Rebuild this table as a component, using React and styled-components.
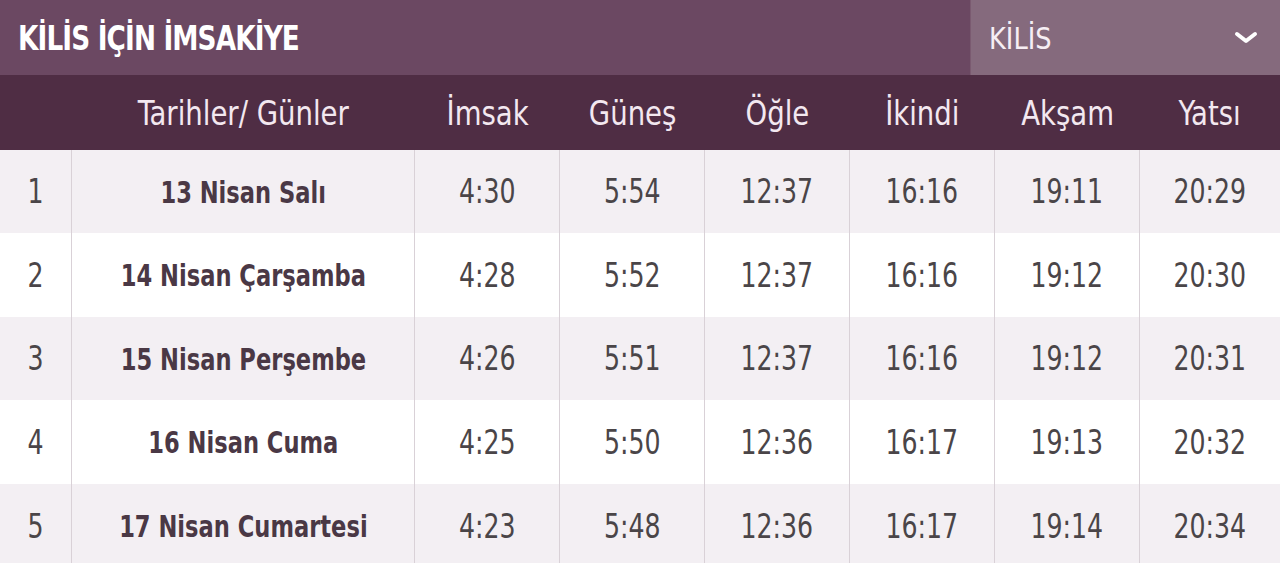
import styled, { createGlobalStyle } from "styled-components";

const GlobalStyle = createGlobalStyle`
  body {
    margin: 0;
    background: #fff;
    font-family: "DejaVu Sans Condensed", "DejaVu Sans", sans-serif;
  }
`;

const Container = styled.div`
  width: 1280px;
  overflow: hidden;
`;

const TopBar = styled.div`
  height: 75px;
  display: flex;
  background: #6b4862;
`;

// the original font is a narrow face; squeeze a wider one to fit
const Narrow = styled.span`
  display: inline-block;
  white-space: nowrap;
  transform: scaleX(${(p) => p.sx || 0.9});
  transform-origin: ${(p) => (p.left ? "left center" : "center")};
`;

const Title = styled.h1`
  flex: 1;
  margin: 0;
  padding-left: 18px;
  display: flex;
  align-items: center;
  color: #fff;
  font-size: 34px;
  font-weight: bold;
  letter-spacing: -1px;
`;

const Select = styled.div`
  width: 310px;
  display: flex;
  align-items: center;
  justify-content: space-between;
  padding: 0 22px 0 18px;
  box-sizing: border-box;
  background: #856a7d;
  border-left: 1px solid #7a5a70;
  color: #f6eef4;
  font-size: 31px;
`;

const Grid = styled.div`
  display: grid;
  grid-template-columns: 72px 343px repeat(5, 145px) 140px;
`;

const HeadCell = styled.div`
  height: 75px;
  display: flex;
  align-items: center;
  justify-content: center;
  background: #4f2d44;
  color: #f3e8f0;
  font-size: 34px;
`;

const Cell = styled.div`
  height: ${(p) => p.h}px;
  display: flex;
  align-items: center;
  justify-content: center;
  background: ${(p) => (p.odd ? "#f3eff3" : "#fff")};
  border-right: ${(p) => (p.last ? "none" : "1px solid #d9d1d7")};
  color: ${(p) => (p.bold ? "#4a3845" : "#4a4548")};
  font-size: ${(p) => (p.bold ? "31px" : "33px")};
  font-weight: ${(p) => (p.bold ? "bold" : "normal")};
`;

const heads = ["", "Tarihler/ Günler", "İmsak", "Güneş", "Öğle", "İkindi", "Akşam", "Yatsı"];

const rows = [
  ["1", "13 Nisan Salı", "4:30", "5:54", "12:37", "16:16", "19:11", "20:29"],
  ["2", "14 Nisan Çarşamba", "4:28", "5:52", "12:37", "16:16", "19:12", "20:30"],
  ["3", "15 Nisan Perşembe", "4:26", "5:51", "12:37", "16:16", "19:12", "20:31"],
  ["4", "16 Nisan Cuma", "4:25", "5:50", "12:36", "16:17", "19:13", "20:32"],
  ["5", "17 Nisan Cumartesi", "4:23", "5:48", "12:36", "16:17", "19:14", "20:34"],
];

const heights = [83, 84, 83, 84, 84];

const Chevron = () => (
  <svg width="24" height="14" viewBox="0 0 24 14">
    <path d="M3 3 L12 10 L21 3" fill="none" stroke="#fff" strokeWidth="4" strokeLinecap="round" strokeLinejoin="round" />
  </svg>
);

export default function App() {
  return (
    <Container>
      <GlobalStyle />
      <TopBar>
        <Title>
          <Narrow left sx={0.86}>KİLİS İÇİN İMSAKİYE</Narrow>
        </Title>
        <Select>
          <Narrow left sx={0.92}>KİLİS</Narrow>
          <Chevron />
        </Select>
      </TopBar>
      <Grid>
        {heads.map((h, i) => (
          <HeadCell key={i}>
            <Narrow sx={0.9}>{h}</Narrow>
          </HeadCell>
        ))}
        {rows.map((r, ri) =>
          r.map((v, ci) => (
            <Cell
              key={ri + "-" + ci}
              h={heights[ri]}
              odd={ri % 2 === 0}
              bold={ci === 1}
              last={ci === r.length - 1}
            >
              <Narrow sx={ci === 1 ? 0.81 : 0.85}>{v}</Narrow>
            </Cell>
          ))
        )}
      </Grid>
    </Container>
  );
}
